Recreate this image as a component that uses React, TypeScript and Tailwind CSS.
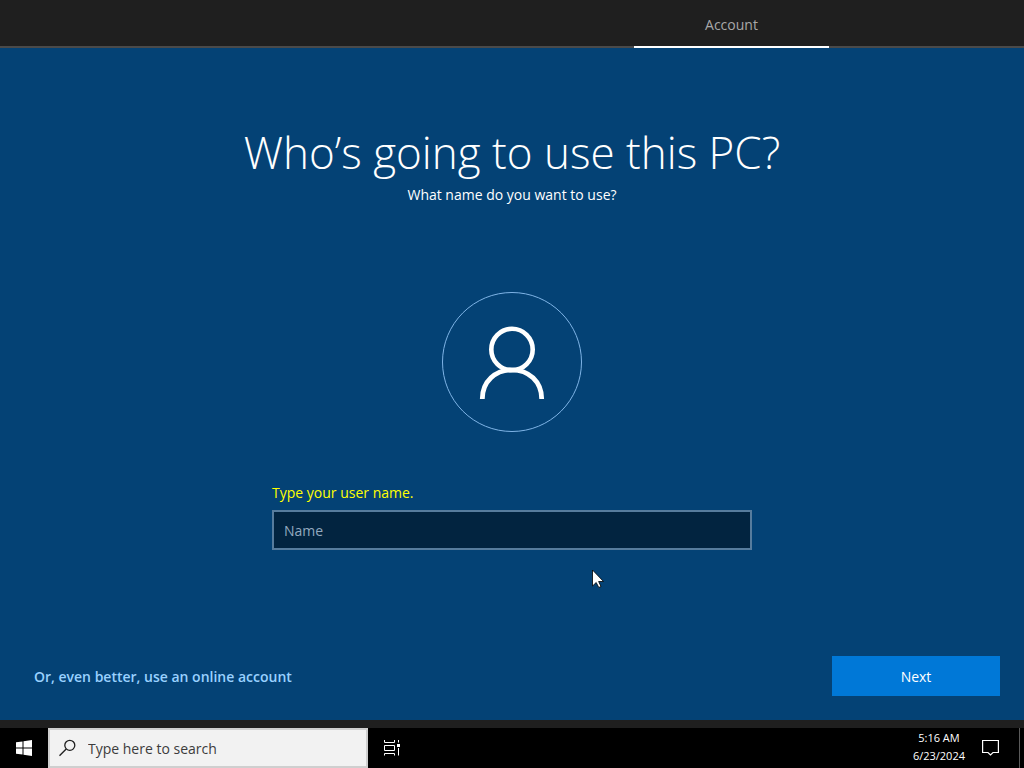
import React from "react";

function UserIcon() {
  return (
    <svg viewBox="0 0 140 140" className="size-[140px]" fill="none" aria-hidden="true">
      <circle cx="70" cy="70" r="69.5" stroke="#7fb4e6" strokeWidth="1" />
      <circle cx="70" cy="57.5" r="20.7" stroke="#fff" strokeWidth="4.6" />
      <path d="M40.3 107C40.3 89.5 53.5 77.8 70 77.8S99.7 89.5 99.7 107" stroke="#fff" strokeWidth="4.8" />
    </svg>
  );
}

function WindowsLogo() {
  return (
    <svg viewBox="0 0 16 16" className="size-4" fill="#fff" aria-hidden="true">
      <path d="M0 2.3 6.5 1.4V7.5H0ZM7.5 1.2 16 0V7.5H7.5ZM0 8.5H6.5V14.6L0 13.7ZM7.5 8.5H16V16L7.5 14.8Z" />
    </svg>
  );
}

function SearchIcon() {
  return (
    <svg viewBox="0 0 18 18" className="size-[18px]" fill="none" stroke="#1f1f1f" strokeWidth="1.3" aria-hidden="true">
      <circle cx="11.8" cy="6.3" r="5" />
      <path d="M8.2 10 1.5 16.8" />
    </svg>
  );
}

function TaskViewIcon() {
  return (
    <svg viewBox="0 0 16 16" className="size-4" fill="none" stroke="#fff" aria-hidden="true">
      <path d="M.5 0V2.5H10.5V0M.5 15.5V13.5H10.5V15.5M.5 5.5H10.5V10.5H.5ZM14.5 0V2.5M14.5 8V15.5" />
      <path d="M13 4H16V7H13Z" fill="#fff" stroke="none" />
    </svg>
  );
}

function NotificationIcon() {
  return (
    <svg viewBox="0 0 17 17" className="size-[17px]" fill="none" stroke="#fff" strokeWidth="1.2" aria-hidden="true">
      <path d="M.6 1.5H16.4V13.5H11L8.5 16 6 13.5H.6Z" />
    </svg>
  );
}

function Cursor() {
  return (
    <svg viewBox="0 0 12 19" className="absolute left-[592px] top-[569px] h-[19px] w-3" aria-hidden="true">
      <path
        d="M.5 1V17L4.2 13.5 6.8 18.5 9 17.5 6.6 12.5H11.5Z"
        fill="#fff"
        stroke="#000"
        strokeWidth=".8"
      />
    </svg>
  );
}

export default function App() {
  return (
    <div className="relative flex min-h-screen flex-col bg-[#1f1f1f] font-['Open_Sans','Noto_Sans',sans-serif] text-sm text-white">
      <header className="flex h-12 justify-end border-b-2 border-[#4a4a4a] pr-[195px]">
        <div className="-mb-0.5 flex w-[195px] items-center justify-center border-b-2 border-white pt-1 text-[#a8a8a8]">
          Account
        </div>
      </header>

      <main className="flex flex-1 flex-col bg-[#044275] px-6 pb-6">
        <div className="flex flex-1 flex-col items-center pt-[72px]">
          <h1 className="text-center text-[44px] leading-16 font-light">Who’s going to use this PC?</h1>
          <p className="text-center leading-[22px]">What name do you want to use?</p>
          <div className="mt-[86px]">
            <UserIcon />
          </div>
          <div className="mt-[50px] flex w-full max-w-[480px] flex-col gap-1.5">
            <label htmlFor="name" className="leading-[22px] text-[#ffff00]">
              Type your user name.
            </label>
            <input
              id="name"
              type="text"
              placeholder="Name"
              className="h-10 w-full border-2 border-[#577c9d] bg-[#022440] px-2.5 outline-none placeholder:text-[#92a9bf]"
            />
          </div>
        </div>
        <div className="flex items-center justify-between">
          <a href="#online" className="pt-0.5 pl-2.5 font-semibold text-[#99d1ff]">
            Or, even better, use an online account
          </a>
          <button type="button" className="h-10 w-[168px] bg-[#0078d7] pt-0.5">
            Next
          </button>
        </div>
      </main>

      <footer className="mt-2 flex h-10 items-stretch bg-black">
        <button type="button" aria-label="Start" className="flex w-12 items-center justify-center">
          <WindowsLogo />
        </button>
        <label className="flex w-80 items-center gap-3 border-2 border-[#cfcfcf] bg-[#f2f2f2] pl-2">
          <SearchIcon />
          <input
            type="text"
            aria-label="Search"
            placeholder="Type here to search"
            className="min-w-0 flex-1 pt-0.5 text-black outline-none placeholder:text-[#3c3c3c]"
          />
        </label>
        <button type="button" aria-label="Task View" className="flex w-12 items-center justify-center">
          <TaskViewIcon />
        </button>
        <div className="ml-auto flex">
          <div className="flex flex-col justify-center pb-0.5 text-center text-[11px] leading-[18px]">
            <span>5:16 AM</span>
            <span>6/23/2024</span>
          </div>
          <button type="button" aria-label="Notifications" className="mr-1 flex w-[50px] items-center justify-center pb-0.5">
            <NotificationIcon />
          </button>
          <div className="mr-1 w-px bg-[#5a5a5a]" />
        </div>
      </footer>

      <Cursor />
    </div>
  );
}
